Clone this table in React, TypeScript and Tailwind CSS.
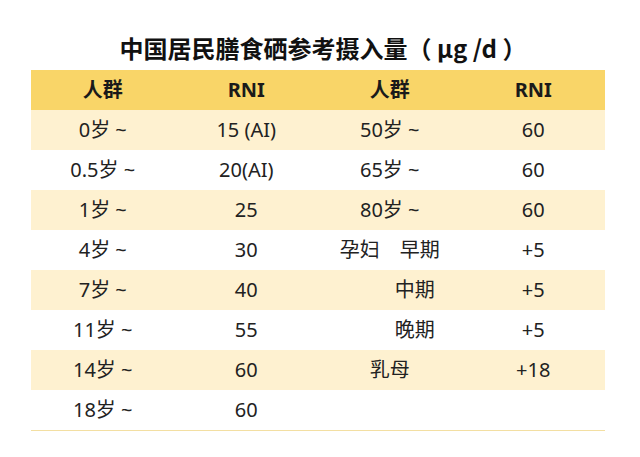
export default function App() {
  // 左右两组：人群 / RNI
  const rows = [
    ["0岁 ~", "15 (AI)", "50岁 ~", "60"],
    ["0.5岁 ~", "20(AI)", "65岁 ~", "60"],
    ["1岁 ~", "25", "80岁 ~", "60"],
    ["4岁 ~", "30", "孕妇　早期", "+5"],
    ["7岁 ~", "40", "中期", "+5"],
    ["11岁 ~", "55", "晚期", "+5"],
    ["14岁 ~", "60", "乳母", "+18"],
    ["18岁 ~", "60", "", ""],
  ]

  return (
    <div className="w-[640px] h-[457px] bg-white text-[#222] font-['Noto_Sans','Noto_Sans_CJK_SC',sans-serif]">
      <div className="h-[70px] flex items-end justify-center pb-[10px]">
        <h1 className="text-[24px] font-bold text-[#111] leading-none pl-[6px] font-['Noto_Sans_CJK_SC','Noto_Sans',sans-serif]">
          中国居民膳食硒参考摄入量（ μg /d ）
        </h1>
      </div>

      <div className="mx-[31px] w-[574px] border-b border-[#f3dfa2]">
        <div className="grid grid-cols-4 h-[40px] items-center bg-[#f9d568] text-[20px] font-bold text-[#1a1a1a]">
          <p className="text-center">人群</p>
          <p className="text-center">RNI</p>
          <p className="text-center">人群</p>
          <p className="text-center">RNI</p>
        </div>

        {rows.map((r, i) => (
          <div
            key={i}
            className={`grid grid-cols-4 h-[40px] items-center text-[20px] ${i % 2 == 0 ? "bg-[#fef1d0]" : "bg-white"}`}
          >
            <p className="text-center">{r[0]}</p>
            <p className="text-center">{r[1]}</p>
            <p className={`text-center ${r[2] == "中期" || r[2] == "晚期" ? "pl-[50px]" : ""}`}>{r[2]}</p>
            <p className="text-center">{r[3]}</p>
          </div>
        ))}
      </div>
    </div>
  )
}
